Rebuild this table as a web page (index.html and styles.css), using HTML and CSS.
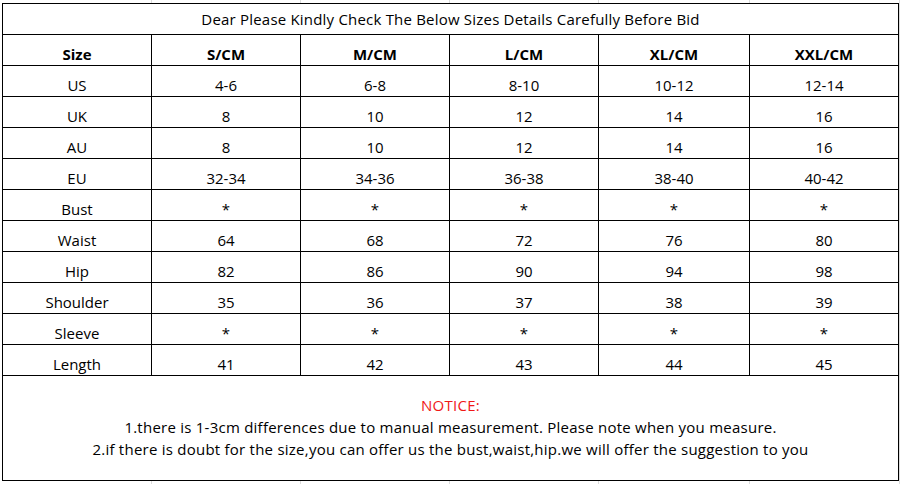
FILE: index.html
```html
<!DOCTYPE html>
<html lang="en">
<head>
<meta charset="utf-8">
<title>Size Chart</title>
<link rel="stylesheet" href="styles.css">
</head>
<body>
<div class="sheet">
  <div class="chart">
    <div class="cell title">Dear Please Kindly Check The Below Sizes Details Carefully Before Bid</div>

    <div class="cell head">Size</div>
    <div class="cell head">S/CM</div>
    <div class="cell head">M/CM</div>
    <div class="cell head">L/CM</div>
    <div class="cell head">XL/CM</div>
    <div class="cell head">XXL/CM</div>

    <div class="cell">US</div><div class="cell">4-6</div><div class="cell">6-8</div><div class="cell">8-10</div><div class="cell">10-12</div><div class="cell">12-14</div>
    <div class="cell">UK</div><div class="cell">8</div><div class="cell">10</div><div class="cell">12</div><div class="cell">14</div><div class="cell">16</div>
    <div class="cell">AU</div><div class="cell">8</div><div class="cell">10</div><div class="cell">12</div><div class="cell">14</div><div class="cell">16</div>
    <div class="cell">EU</div><div class="cell">32-34</div><div class="cell">34-36</div><div class="cell">36-38</div><div class="cell">38-40</div><div class="cell">40-42</div>
    <div class="cell">Bust</div><div class="cell">*</div><div class="cell">*</div><div class="cell">*</div><div class="cell">*</div><div class="cell">*</div>
    <div class="cell">Waist</div><div class="cell">64</div><div class="cell">68</div><div class="cell">72</div><div class="cell">76</div><div class="cell">80</div>
    <div class="cell">Hip</div><div class="cell">82</div><div class="cell">86</div><div class="cell">90</div><div class="cell">94</div><div class="cell">98</div>
    <div class="cell">Shoulder</div><div class="cell">35</div><div class="cell">36</div><div class="cell">37</div><div class="cell">38</div><div class="cell">39</div>
    <div class="cell">Sleeve</div><div class="cell">*</div><div class="cell">*</div><div class="cell">*</div><div class="cell">*</div><div class="cell">*</div>
    <div class="cell">Length</div><div class="cell">41</div><div class="cell">42</div><div class="cell">43</div><div class="cell">44</div><div class="cell">45</div>

    <div class="cell notice">
      <p class="notice-title">NOTICE:</p>
      <p>1.there is 1-3cm differences due to manual measurement. Please note when you measure.</p>
      <p>2.if there is doubt for the size,you can offer us the bust,waist,hip.we will offer the suggestion to you</p>
    </div>
  </div>
</div>
</body>
</html>
```

FILE: styles.css
```css
html {
  background-color: #ffffff;
  background-image:
    linear-gradient(#dcdcdc, #dcdcdc),
    linear-gradient(#dcdcdc, #dcdcdc),
    linear-gradient(#dcdcdc, #dcdcdc),
    linear-gradient(#dcdcdc, #dcdcdc),
    linear-gradient(#dcdcdc, #dcdcdc),
    linear-gradient(#dcdcdc, #dcdcdc);
  background-repeat: no-repeat;
  background-size: 1px 100%;
  background-position: 151px 0, 300px 0, 449px 0, 598px 0, 749px 0, 899px 0;
  height: 100%;
}

body {
  margin: 0;
  font-family: "Open Sans", "Noto Sans", sans-serif;
  font-size: 15px;
  color: #000;
}

.sheet {
  padding: 3px 0 0 2px;
}

.chart {
  display: grid;
  grid-template-columns: 148px 148px 148px 148px 150px 148px;
  grid-template-rows: repeat(12, 30px) 104px;
  gap: 1px;
  padding: 1px;
  background: #000;
  width: 895px;
}

.cell {
  background: #fff;
  display: flex;
  align-items: flex-end;
  justify-content: center;
  line-height: 20px;
  padding-bottom: 1px;
  white-space: nowrap;
}

.title {
  grid-column: 1 / -1;
  align-items: center;
  padding-bottom: 0;
  letter-spacing: 0.2px;
}

.head {
  font-weight: 700;
}

.notice {
  grid-column: 1 / -1;
  flex-direction: column;
  justify-content: flex-start;
  align-items: center;
  padding: 18px 0 0;
  line-height: 22px;
  letter-spacing: 0.24px;
}

.notice p {
  margin: 0;
}

.notice-title {
  color: #f01818;
}
```
